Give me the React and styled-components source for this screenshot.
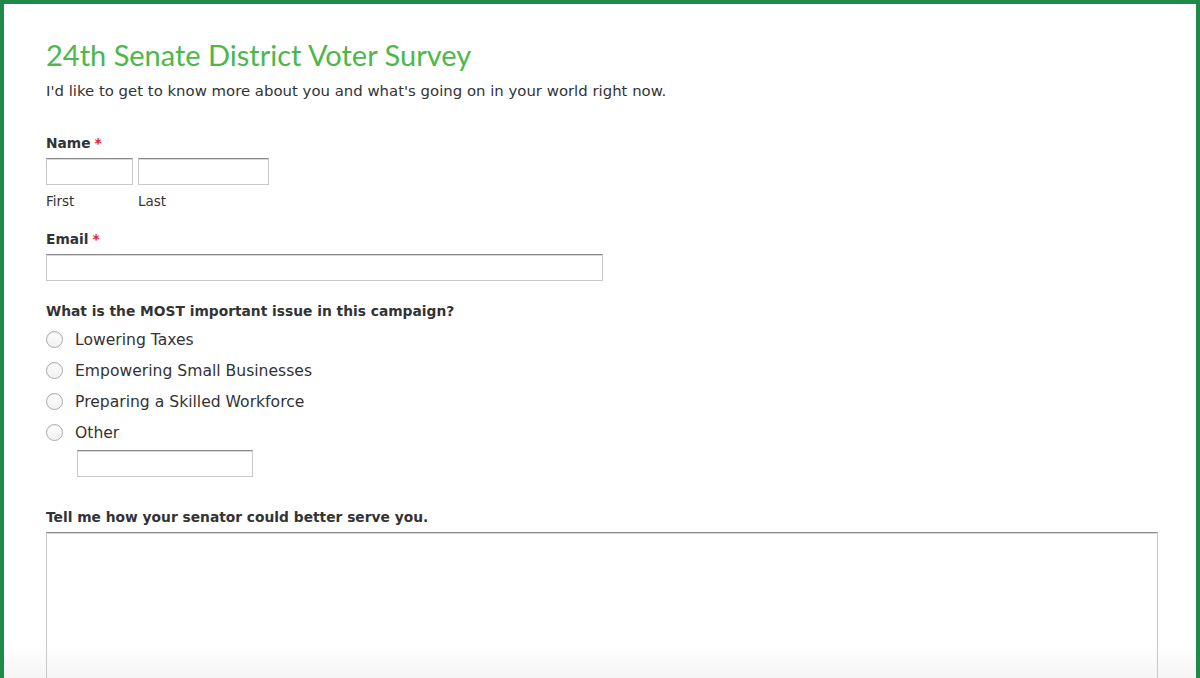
import React from 'react';
import styled, { createGlobalStyle } from 'styled-components';

const GlobalStyle = createGlobalStyle`
  html, body {
    margin: 0;
    padding: 0;
    background: #fff;
  }
`;

const Frame = styled.div`
  box-sizing: border-box;
  height: 678px;
  overflow: hidden;
  border: 4px solid #1f8a4a;
  border-bottom: none;
  background: linear-gradient(to bottom, #fff 0, #fff 640px, #f4f4f4 678px);
  font-family: 'DejaVu Sans', 'Liberation Sans', sans-serif;
  color: #333;
`;

const Form = styled.form`
  padding: 34px 0 0 42px;
  width: 1112px;
`;

const Title = styled.h1`
  margin: 0;
  font-family: Lato, 'Open Sans', sans-serif;
  font-weight: 400;
  font-size: 29px;
  line-height: 34px;
  color: #4cb848;
`;

const Intro = styled.p`
  margin: 9px 0 0;
  font-size: 14.9px;
  line-height: 20px;
`;

const Field = styled.div`
  margin-top: ${(p) => p.gap || 22}px;
`;

const Label = styled.div`
  font-size: 13.8px;
  font-weight: bold;
  line-height: 18px;
  margin-bottom: 6px;
`;

const Req = styled.span`
  color: #e0212e;
  margin-left: 4px;
`;

const Row = styled.div`
  display: flex;
  gap: 5px;
`;

const Part = styled.div`
  display: flex;
  flex-direction: column;
`;

const Sub = styled.span`
  font-size: 13.5px;
  line-height: 16px;
  margin-top: 8px;
  color: #333;
`;

const Input = styled.input`
  box-sizing: border-box;
  width: ${(p) => p.w}px;
  height: 27px;
  margin: ${(p) => p.m || 0};
  border: 1px solid #c8c8c8;
  border-top-color: #8a8a8a;
  box-shadow: inset 0 1px 0 #d8d8d8;
  background: #fff;
  padding: 2px 4px;
  font: inherit;
  outline: none;
`;

const Options = styled.div`
  display: flex;
  flex-direction: column;
  margin-top: -2px;
`;

const Option = styled.label`
  display: flex;
  align-items: center;
  height: 31px;
  font-size: 15.6px;
`;

const Radio = styled.span`
  box-sizing: border-box;
  width: 17px;
  height: 17px;
  border-radius: 50%;
  border: 1px solid #aaa;
  background: linear-gradient(#fdfdfd, #f1f1f1);
  box-shadow: inset 0 1px 1px rgba(0, 0, 0, 0.06);
  margin-right: 12px;
`;

const TextArea = styled.textarea`
  display: block;
  box-sizing: border-box;
  width: 1112px;
  height: 200px;
  border: 1px solid #c8c8c8;
  border-top-color: #8a8a8a;
  box-shadow: inset 0 1px 0 #d8d8d8;
  background: transparent;
  resize: none;
  outline: none;
`;

const issues = [
  'Lowering Taxes',
  'Empowering Small Businesses',
  'Preparing a Skilled Workforce',
  'Other'
];

export default function App() {
  return (
    <>
      <GlobalStyle />
      <Frame>
        <Form>
          <Title>24th Senate District Voter Survey</Title>
          <Intro>
            I'd like to get to know more about you and what's going on in your world right now.
          </Intro>

          <Field gap={33}>
            <Label>
              Name<Req>*</Req>
            </Label>
            <Row>
              <Part>
                <Input w={87} />
                <Sub>First</Sub>
              </Part>
              <Part>
                <Input w={131} />
                <Sub>Last</Sub>
              </Part>
            </Row>
          </Field>

          <Field gap={21}>
            <Label>
              Email<Req>*</Req>
            </Label>
            <Input w={557} />
          </Field>

          <Field gap={21}>
            <Label>What is the MOST important issue in this campaign?</Label>
            <Options>
              {issues.map((t) => (
                <Option key={t}>
                  <Radio />
                  {t}
                </Option>
              ))}
            </Options>
            <Input w={176} m="2px 0 0 31px" />
          </Field>

          <Field gap={31}>
            <Label>Tell me how your senator could better serve you.</Label>
            <TextArea />
          </Field>
        </Form>
      </Frame>
    </>
  );
}
